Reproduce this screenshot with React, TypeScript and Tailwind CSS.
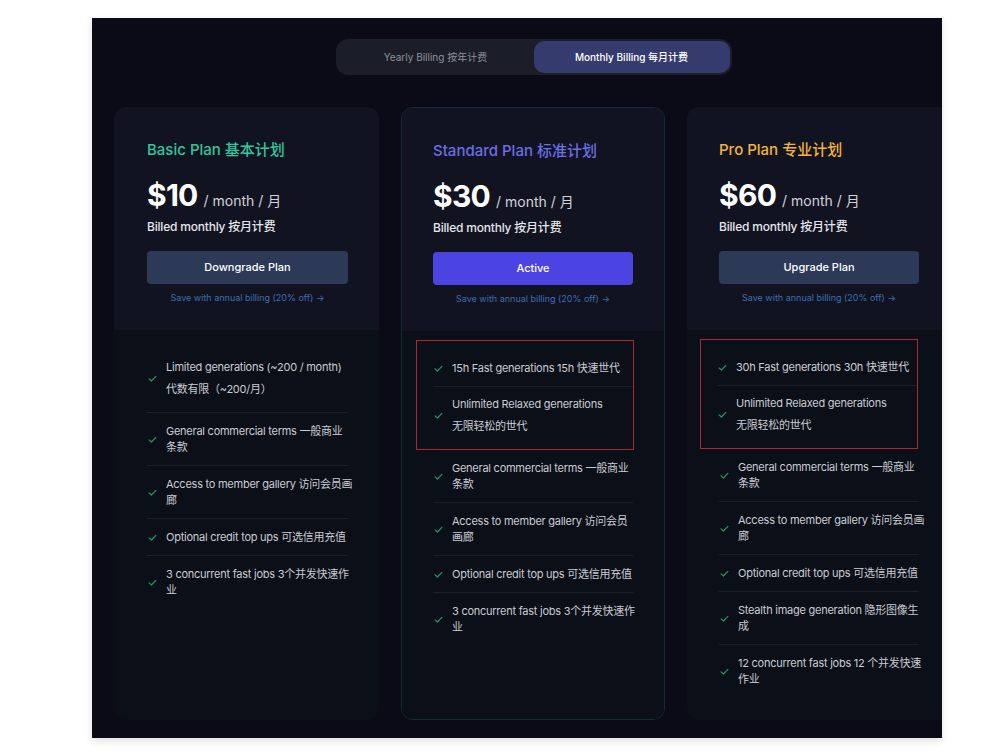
import React from 'react';

type Feature = { lines: string[]; tall?: boolean };

interface Plan {
  name: string;
  titleColor: string;
  price: string;
  button: string;
  active?: boolean;
  boxed: number;
  boxClass: string;
  cardClass: string;
  padClass: string;
  features: Feature[];
}

const PLANS: Plan[] = [
  {
    name: 'Basic Plan 基本计划',
    titleColor: 'text-[#2fc79b]',
    price: '$10',
    button: 'Downgrade Plan',
    boxed: 0,
    boxClass: '',
    cardClass: 'w-[265px]',
    padClass: 'pl-[33px] pr-[31px]',
    features: [
      { lines: ['Limited generations (~200 / month)', '代数有限（~200/月）'], tall: true },
      { lines: ['General commercial terms 一般商业', '条款'] },
      { lines: ['Access to member gallery 访问会员画', '廊'] },
      { lines: ['Optional credit top ups 可选信用充值'] },
      { lines: ['3 concurrent fast jobs 3个并发快速作', '业'] },
    ],
  },
  {
    name: 'Standard Plan 标准计划',
    titleColor: 'text-[#6a6fe3]',
    price: '$30',
    button: 'Active',
    active: true,
    boxed: 2,
    boxClass: '-ml-[17px] w-[218px]',
    cardClass: 'w-[264px] border border-[#172b36]',
    padClass: 'pl-[31px] pr-[31px]',
    features: [
      { lines: ['15h Fast generations 15h 快速世代'] },
      { lines: ['Unlimited Relaxed generations', '无限轻松的世代'], tall: true },
      { lines: ['General commercial terms 一般商业', '条款'] },
      { lines: ['Access to member gallery 访问会员', '画廊'] },
      { lines: ['Optional credit top ups 可选信用充值'] },
      { lines: ['3 concurrent fast jobs 3个并发快速作', '业'] },
    ],
  },
  {
    name: 'Pro Plan 专业计划',
    titleColor: 'text-[#f2b338]',
    price: '$60',
    button: 'Upgrade Plan',
    boxed: 2,
    boxClass: '-ml-[19px] w-[218px]',
    cardClass: 'w-[265px]',
    padClass: 'pl-[32px] pr-[33px]',
    features: [
      { lines: ['30h Fast generations 30h 快速世代'] },
      { lines: ['Unlimited Relaxed generations', '无限轻松的世代'], tall: true },
      { lines: ['General commercial terms 一般商业', '条款'] },
      { lines: ['Access to member gallery 访问会员画', '廊'] },
      { lines: ['Optional credit top ups 可选信用充值'] },
      { lines: ['Stealth image generation 隐形图像生', '成'] },
      { lines: ['12 concurrent fast jobs 12 个并发快速', '作业'] },
    ],
  },
];

function Check() {
  return (
    <svg width="9" height="9" viewBox="0 0 10 10" className="shrink-0 ml-[1px]">
      <path d="M1.2 5.4 L3.8 7.8 L8.8 2.6" fill="none" stroke="#1f9a62" strokeWidth="1.3" strokeLinecap="round" strokeLinejoin="round" />
    </svg>
  );
}

function FeatureRow({ f, last }: { f: Feature; last: boolean }) {
  return (
    <div
      className={`flex items-center gap-[9px] ${f.tall ? 'pt-[6px] pb-[12px] leading-[22px]' : 'py-[10px] leading-4'} ${
        last ? '' : 'border-b border-[#1a2029]'
      }`}
    >
      <Check />
      <div className="text-[11px] tracking-[-0.25px] text-[#c9ccd4] whitespace-nowrap">
        {f.lines.map((l, i) => (
          <div key={i}>{l}</div>
        ))}
      </div>
    </div>
  );
}

function PlanCard({ plan }: { plan: Plan }) {
  const boxed = plan.features.slice(0, plan.boxed);
  const rest = plan.features.slice(plan.boxed);
  return (
    <div className={`h-[613px] shrink-0 rounded-xl overflow-hidden flex flex-col ${plan.cardClass}`}>
      {/* Top */}
      <div className={`h-[223px] shrink-0 bg-[#121321] pt-[33px] ${plan.padClass}`}>
        <h3 className={`text-[15px] leading-5 font-medium ${plan.titleColor}`}>{plan.name}</h3>
        <div className="flex items-baseline gap-[6px] mt-[17px] h-9">
          <span className="text-[30px] leading-9 font-bold text-white tracking-tight">{plan.price}</span>
          <span className="text-[14px] text-[#d0d3db]">/ month / 月</span>
        </div>
        <p className="mt-[6px] text-[12px] leading-4 font-medium tracking-[-0.2px] text-[#e4e6eb]">Billed monthly 按月计费</p>
        <button
          className={`mt-4 w-full h-[33px] rounded-[4px] text-[11px] font-medium text-white ${
            plan.active ? 'bg-[#4c44e2]' : 'bg-[#2c3a58]'
          }`}
        >
          {plan.button}
        </button>
        <p className="mt-[8px] text-center text-[9px] leading-3 text-[#3d6db0]">Save with annual billing (20% off) →</p>
      </div>

      {/* Features */}
      <div className={`flex-1 bg-[#0b0f17] pt-[9px] ${plan.padClass}`}>
        {boxed.length > 0 ? (
          <div className={`border border-[#b3232e] pl-[16px] pt-[9px] ${plan.boxClass}`}>
            {boxed.map((f, i) => (
              <FeatureRow key={i} f={f} last={i === boxed.length - 1} />
            ))}
          </div>
        ) : (
          <div className="h-[11px]" />
        )}
        {rest.map((f, i) => (
          <FeatureRow key={i} f={f} last={i === rest.length - 1} />
        ))}
      </div>
    </div>
  );
}

export default function App() {
  return (
    <div
      className="min-h-screen bg-white pt-[18px] pl-[92px]"
      style={{ fontFamily: 'Inter, "Noto Sans CJK SC", sans-serif' }}
    >
      <div className="w-[850px] h-[720px] bg-[#0a0b17] overflow-hidden shadow-[0_3px_8px_rgba(0,0,0,0.12)]">
        <div className="w-[839px] ml-[22px] pt-[21px]">
          {/* Billing toggle */}
          <div className="mx-auto w-[396px] h-[36px] rounded-xl bg-[#1b1e29] p-[2px] grid grid-cols-2">
            <button className="text-[10px] text-[#8d919d]">Yearly Billing 按年计费</button>
            <button className="rounded-[10px] bg-[#363b6d] text-[10px] font-medium text-white">
              Monthly Billing 每月计费
            </button>
          </div>

          <div className="flex gap-[22px] mt-[32px]">
            {PLANS.map(p => (
              <PlanCard key={p.name} plan={p} />
            ))}
          </div>
        </div>
      </div>
    </div>
  );
}
